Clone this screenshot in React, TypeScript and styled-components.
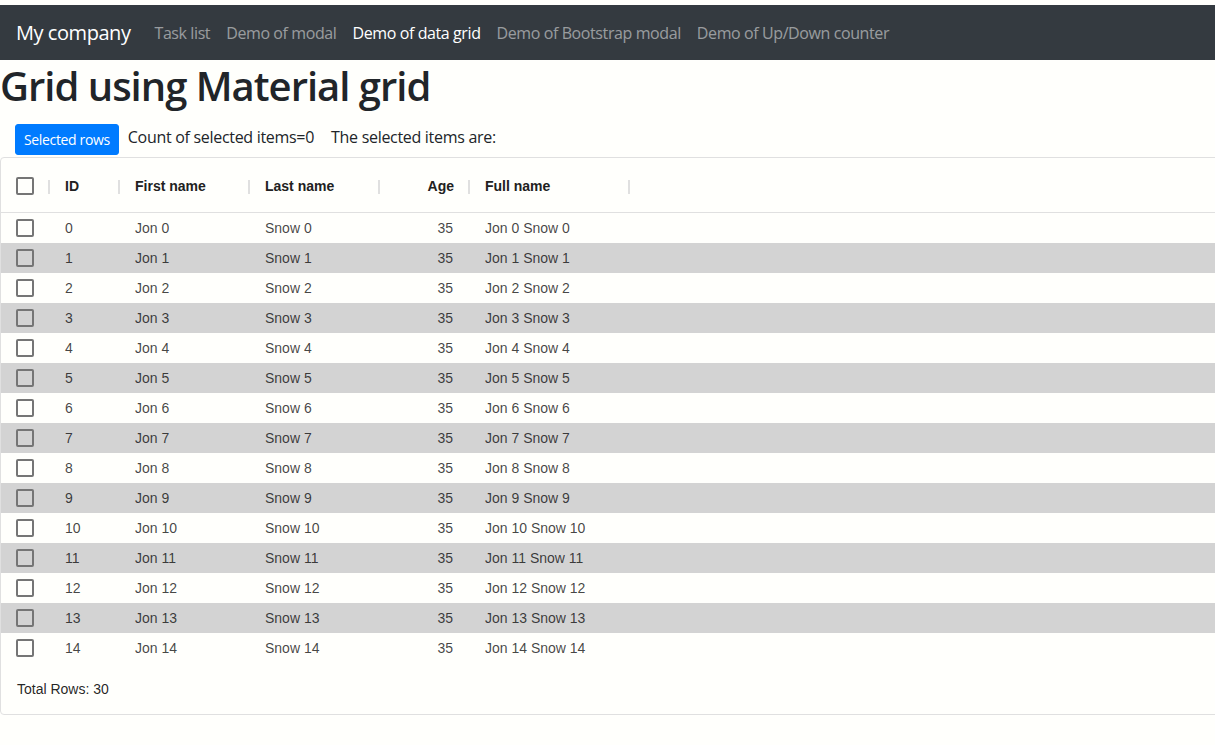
import React from "react";
import styled, { createGlobalStyle } from "styled-components";

const GlobalStyle = createGlobalStyle`
  html, body {
    margin: 0;
    padding: 0;
    background: #fffffc;
    overflow: hidden;
  }
  body {
    font-family: "Segoe UI", "Open Sans", "Noto Sans", sans-serif;
    color: #212529;
  }
  * { box-sizing: border-box; }
`;

const Page = styled.div`
  padding-top: 5px;
  width: 1215px;
`;

const NavBar = styled.nav`
  height: 55px;
  background: #343a40;
  display: flex;
  align-items: center;
  padding: 1px 16px 0 16px;
`;

const Brand = styled.a`
  font-size: 20px;
  color: #fff;
  margin-right: 16px;
  line-height: 30px;
  letter-spacing: -0.45px;
`;

const NavLink = styled.a<{ $active?: boolean }>`
  font-size: 16px;
  padding: 8px;
  color: ${(p) => (p.$active ? "#fff" : "rgba(255,255,255,0.5)")};
  letter-spacing: -0.4px;
`;

const Title = styled.h1`
  margin: 0 0 8px 0;
  padding-top: 2px;
  height: 48px;
  font-size: 40px;
  font-weight: 600;
  line-height: 48px;
  letter-spacing: -1px;
`;

const Toolbar = styled.div`
  display: flex;
  align-items: center;
  padding: 8px 0 2px 15px;
  gap: 9px;
`;

const Button = styled.button`
  font-family: inherit;
  background: #007bff;
  color: #fff;
  border: 1px solid #007bff;
  border-radius: 3px;
  font-size: 14px;
  line-height: 21px;
  padding: 4px 8px;
  letter-spacing: -0.35px;
`;

const Info = styled.span`
  font-size: 16px;
  margin-right: 8px;
  letter-spacing: -0.3px;
  margin-top: -6px;
`;

const Grid = styled.div`
  width: 1240px;
  border: 1px solid #e0e0e0;
  border-radius: 4px;
  font-family: "Liberation Sans", Arial, sans-serif;
  font-size: 14px;
`;

const HeaderRow = styled.div`
  display: flex;
  height: 55px;
  align-items: center;
  border-bottom: 1px solid #e0e0e0;
  padding-top: 1px;
`;

const HeaderCell = styled.div<{ $w: number; $right?: boolean }>`
  width: ${(p) => p.$w}px;
  height: 100%;
  display: flex;
  align-items: center;
  justify-content: ${(p) => (p.$right ? "flex-end" : "flex-start")};
  padding-left: 14px;
  position: relative;
  font-weight: bold;
  color: #212121;
`;

const CheckHeaderCell = styled(HeaderCell)`
  padding-left: 15px;
`;

const AgeLabel = styled.span`
  padding-right: 17px;
`;

const Separator = styled.span`
  position: absolute;
  right: 1px;
  top: 21px;
  width: 2px;
  height: 14px;
  background: #e0e0e0;
`;

const Row = styled.div<{ $alt: boolean }>`
  display: flex;
  height: 30px;
  align-items: center;
  background: ${(p) => (p.$alt ? "#d3d3d3" : "transparent")};
  color: rgba(0, 0, 0, 0.74);
`;

const Cell = styled.div<{ $w: number; $right?: boolean }>`
  width: ${(p) => p.$w}px;
  padding: ${(p) => (p.$right ? "0 18px 0 0" : "0 0 0 14px")};
  text-align: ${(p) => (p.$right ? "right" : "left")};
  white-space: nowrap;
`;

const CheckCell = styled.div`
  width: 50px;
  padding-left: 15px;
  display: flex;
  align-items: center;
`;

const Box = styled.span`
  width: 18px;
  height: 18px;
  border: 2px solid #757575;
  border-radius: 2px;
  display: inline-block;
`;

const Footer = styled.div`
  height: 51px;
  display: flex;
  align-items: center;
  padding-left: 16px;
  color: rgba(0, 0, 0, 0.87);
`;

const cols = [
  { key: "id", label: "ID", w: 70 },
  { key: "first", label: "First name", w: 130 },
  { key: "last", label: "Last name", w: 130 },
  { key: "age", label: "Age", w: 90, right: true },
  { key: "full", label: "Full name", w: 160 },
];

const rows = Array.from({ length: 15 }, (_, i) => ({
  id: String(i),
  first: `Jon ${i}`,
  last: `Snow ${i}`,
  age: "35",
  full: `Jon ${i} Snow ${i}`,
}));

export default function App() {
  return (
    <Page>
      <GlobalStyle />
      <NavBar>
        <Brand>My company</Brand>
        <NavLink>Task list</NavLink>
        <NavLink>Demo of modal</NavLink>
        <NavLink $active>Demo of data grid</NavLink>
        <NavLink>Demo of Bootstrap modal</NavLink>
        <NavLink>Demo of Up/Down counter</NavLink>
      </NavBar>
      <Title>Grid using Material grid</Title>
      <Toolbar>
        <Button>Selected rows</Button>
        <Info>Count of selected items=0</Info>
        <Info>The selected items are:</Info>
      </Toolbar>
      <Grid>
        <HeaderRow>
          <CheckHeaderCell $w={50}>
            <Box />
            <Separator />
          </CheckHeaderCell>
          {cols.map((c) => (
            <HeaderCell key={c.key} $w={c.w} $right={c.right}>
              {c.right ? <AgeLabel>{c.label}</AgeLabel> : c.label}
              <Separator />
            </HeaderCell>
          ))}
        </HeaderRow>
        {rows.map((r, i) => (
          <Row key={r.id} $alt={i % 2 === 1}>
            <CheckCell>
              <Box />
            </CheckCell>
            {cols.map((c) => (
              <Cell key={c.key} $w={c.w} $right={c.right}>
                {(r as any)[c.key]}
              </Cell>
            ))}
          </Row>
        ))}
        <Footer>Total Rows: 30</Footer>
      </Grid>
    </Page>
  );
}
